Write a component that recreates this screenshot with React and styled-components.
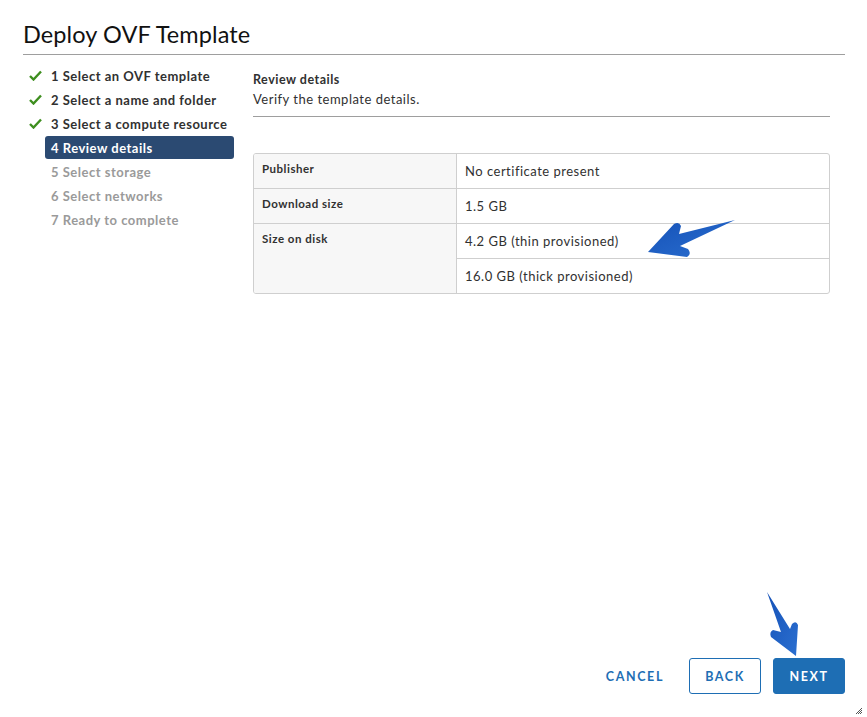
import React from "react";
import styled, { createGlobalStyle } from "styled-components";

const steps = [
  { n: 1, label: "Select an OVF template", state: "done" },
  { n: 2, label: "Select a name and folder", state: "done" },
  { n: 3, label: "Select a compute resource", state: "done" },
  { n: 4, label: "Review details", state: "active" },
  { n: 5, label: "Select storage", state: "todo" },
  { n: 6, label: "Select networks", state: "todo" },
  { n: 7, label: "Ready to complete", state: "todo" },
];

const Global = createGlobalStyle`
  html, body {
    margin: 0;
    background: #fff;
  }
  body {
    font-family: Lato, "Open Sans", sans-serif;
    color: #313131;
    letter-spacing: 0.5px;
  }
`;

const Dialog = styled.div`
  position: relative;
  width: 867px;
  height: 717px;
  box-sizing: border-box;
  padding: 0 22px 0 23px;
  display: flex;
  flex-direction: column;
`;

const Title = styled.h1`
  margin: 0;
  padding: 20px 0 6px;
  font-size: 23.5px;
  font-weight: 400;
  letter-spacing: 0.1px;
  color: #111;
  border-bottom: 1px solid #9e9e9e;
`;

const Body = styled.div`
  flex: 1;
  display: flex;
  padding-top: 9px;
`;

const Nav = styled.ul`
  list-style: none;
  margin: 0;
  padding: 0;
  width: 211px;
  flex-shrink: 0;
`;

const Step = styled.li`
  display: flex;
  align-items: center;
  height: 23px;
  margin-bottom: 1px;
  margin-left: 22px;
  padding-left: 6px;
  border-radius: 3px;
  font-size: 13px;
  font-weight: 700;
  color: ${(p) => (p.$state === "todo" ? "#9a9a9a" : p.$state === "active" ? "#fff" : "#313131")};
  background: ${(p) => (p.$state === "active" ? "#2b4a72" : "transparent")};
  position: relative;
`;

const Check = styled.svg`
  position: absolute;
  left: -16px;
  top: 6px;
`;

const Content = styled.div`
  flex: 1;
  margin-left: 19px;
  margin-right: 15px;
`;

const Heading = styled.div`
  font-size: 12.5px;
  font-weight: 700;
  margin-top: 7px;
  line-height: 18px;
`;

const Sub = styled.div`
  font-size: 13px;
  line-height: 18px;
  margin-top: 1px;
  padding-bottom: 8px;
  border-bottom: 1px solid #9e9e9e;
`;

const Table = styled.div`
  margin-top: 36px;
  display: grid;
  grid-template-columns: 203px 1fr;
  border: 1px solid #cfcfcf;
  border-radius: 3px;
  overflow: hidden;
`;

const Label = styled.div`
  grid-row: span ${(p) => p.$span || 1};
  background: #f7f7f7;
  border-right: 1px solid #cfcfcf;
  border-top: ${(p) => (p.$first ? "none" : "1px solid #cfcfcf")};
  font-size: 11.5px;
  font-weight: 700;
  padding: 8px 8px 0;
  height: ${(p) => 35 * (p.$span || 1) - 9}px;
`;

const Value = styled.div`
  border-top: ${(p) => (p.$first ? "none" : "1px solid #cfcfcf")};
  font-size: 13px;
  padding: 0 8px;
  height: 34px;
  display: flex;
  align-items: center;
`;

const Footer = styled.div`
  display: flex;
  justify-content: flex-end;
  align-items: center;
  gap: 12px;
  padding-bottom: 23px;
`;

const Button = styled.button`
  box-sizing: border-box;
  height: 36px;
  min-width: 72px;
  padding: 0 12px;
  border-radius: 3px;
  font-family: Lato, "Open Sans", sans-serif;
  font-size: 12.5px;
  font-weight: 700;
  letter-spacing: 1.6px;
  cursor: pointer;
  border: 1px solid ${(p) => (p.$variant === "link" ? "transparent" : "#1e6eb4")};
  background: ${(p) => (p.$variant === "primary" ? "#1e6eb4" : "#fff")};
  color: ${(p) => (p.$variant === "primary" ? "#fff" : "#1e6eb4")};
`;

const Arrow = styled.svg`
  position: absolute;
  left: 0;
  top: 0;
  pointer-events: none;
`;

const Grip = styled.svg`
  position: absolute;
  right: 4px;
  bottom: 2px;
`;

export default function App() {
  return (
    <Dialog>
      <Global />
      <Title>Deploy OVF Template</Title>
      <Body>
        <Nav>
          {steps.map((s) => (
            <Step key={s.n} $state={s.state}>
              {s.state === "done" && (
                <Check width="13" height="11" viewBox="0 0 13 11">
                  <path d="M1 6 L4.5 9.5 L12 1.5" fill="none" stroke="#3e8e1f" strokeWidth="2.4" />
                </Check>
              )}
              {s.n} {s.label}
            </Step>
          ))}
        </Nav>
        <Content>
          <Heading>Review details</Heading>
          <Sub>Verify the template details.</Sub>
          <Table>
            <Label $first>Publisher</Label>
            <Value $first>No certificate present</Value>
            <Label>Download size</Label>
            <Value>1.5 GB</Value>
            <Label $span={2}>Size on disk</Label>
            <Value>4.2 GB (thin provisioned)</Value>
            <Value>16.0 GB (thick provisioned)</Value>
          </Table>
        </Content>
      </Body>
      <Footer>
        <Button $variant="link">CANCEL</Button>
        <Button $variant="outline">BACK</Button>
        <Button $variant="primary">NEXT</Button>
      </Footer>
      <Arrow width="867" height="717" viewBox="0 0 867 717">
        <defs>
          <linearGradient id="ag" x1="0" y1="0" x2="1" y2="1">
            <stop offset="0" stopColor="#1552b8" />
            <stop offset="1" stopColor="#2b6fd0" />
          </linearGradient>
        </defs>
        <path
          d="M735 220 L679 234 L681 226 Q679 221 674 224 L648 252 L687 257 Q692 254 688 249 L680 246 Z"
          fill="url(#ag)"
        />
        <path
          d="M767 592 L781 632 L773 630 Q769 632 771 637 L796 656 L798 625 Q796 620 792 624 L790 629 Z"
          fill="url(#ag)"
        />
      </Arrow>
      <Grip width="8" height="8" viewBox="0 0 8 8">
        <path d="M1 7 L7 1 M3 7 L7 3 M5 7 L7 5" stroke="#555" strokeWidth="1" />
      </Grip>
    </Dialog>
  );
}
